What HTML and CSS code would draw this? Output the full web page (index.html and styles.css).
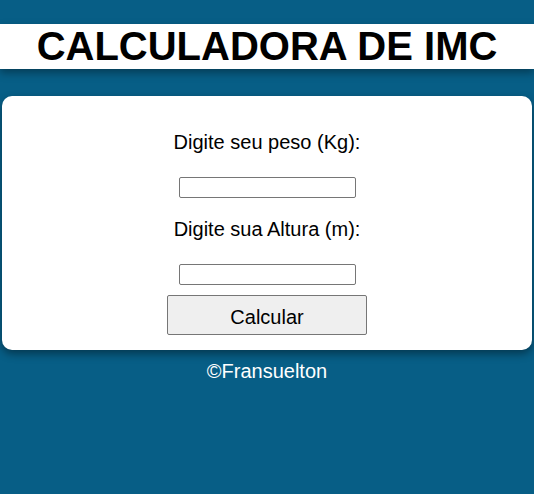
FILE: index.html
```html
<!DOCTYPE html>
<html lang="pt-BR">
<head>
<meta charset="utf-8">
<title>Calculadora de IMC</title>
<link rel="stylesheet" href="styles.css">
</head>
<body>
<header class="topo"><h1 class="titulo">CALCULADORA DE IMC</h1></header>
<main class="cartao">
  <label class="rotulo" for="peso">Digite seu peso (Kg):</label>
  <input class="campo" id="peso" type="text">
  <label class="rotulo rotulo-2" for="altura">Digite sua Altura (m):</label>
  <input class="campo" id="altura" type="text">
  <button class="botao" type="button">Calcular</button>
</main>
<footer class="rodape">©Fransuelton</footer>
</body>
</html>
```
FILE: styles.css
```css
html, body {
  margin: 0;
  padding: 0;
}
body {
  background: #075e86;
  font-family: "Liberation Sans", Arial, sans-serif;
  min-height: 494px;
  padding-top: 24px;
}
.topo {
  background: #fff;
  height: 45px;
  display: flex;
  align-items: center;
  justify-content: center;
  box-shadow: 0 4px 8px rgba(0, 0, 0, 0.35);
}
.titulo {
  margin: 0;
  font-size: 40px;
  font-weight: bold;
  color: #000;
  line-height: 45px;
}
.cartao {
  margin: 27px 2px 0;
  background: #fff;
  border-radius: 10px;
  box-shadow: 0 4px 8px rgba(0, 0, 0, 0.4);
  display: flex;
  flex-direction: column;
  align-items: center;
  padding: 35px 0 15px;
  height: 254px;
  box-sizing: border-box;
}
.rotulo {
  font-size: 20px;
  line-height: 22px;
  color: #000;
  margin-bottom: 24px;
}
.rotulo-2 {
  margin-top: 20px;
}
.campo {
  width: 177px;
  height: 21px;
  box-sizing: border-box;
  border: 1px solid #767676;
  border-radius: 2px;
  padding: 1px 2px;
  margin: 0;
  background: #fff;
}
.botao {
  margin-top: 10px;
  width: 200px;
  height: 40px;
  box-sizing: border-box;
  background: #efefef;
  border: 1px solid #767676;
  border-radius: 2px;
  font-family: "Liberation Sans", Arial, sans-serif;
  font-size: 20px;
  color: #000;
  padding: 4px 0 0;
}
.rodape {
  text-align: center;
  color: #fff;
  font-size: 20px;
  margin-top: 10px;
}
```
